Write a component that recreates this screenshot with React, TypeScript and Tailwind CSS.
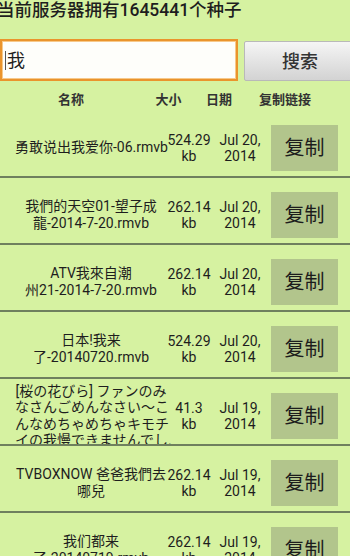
const FONT = "font-['Roboto','Noto_Sans_CJK_SC',sans-serif]";

type Torrent = {
  name: string[];
  size: string;
  date: string;
};

const torrents: Torrent[] = [
  { name: ['勇敢说出我爱你-06.rmvb'], size: '524.29', date: 'Jul 20,' },
  { name: ['我們的天空01-望子成', '龍-2014-7-20.rmvb'], size: '262.14', date: 'Jul 20,' },
  { name: ['ATV我來自潮', '州21-2014-7-20.rmvb'], size: '262.14', date: 'Jul 20,' },
  { name: ['日本!我来', '了-20140720.rmvb'], size: '524.29', date: 'Jul 20,' },
  {
    name: ['[桜の花びら] ファンのみ', 'なさんごめんなさい～こ', 'んなめちゃめちゃキモチ', 'イの我慢できませんでし.'],
    size: '41.3',
    date: 'Jul 19,',
  },
  { name: ['TVBOXNOW 爸爸我們去', '哪兒'], size: '262.14', date: 'Jul 19,' },
  { name: ['我们都来', '了-20140719.rmvb'], size: '262.14', date: 'Jul 19,' },
];

const Row = ({ t }: { t: Torrent }) => (
  <div className="flex items-center h-[67px] shrink-0 pt-[8px] border-b-2 border-[#6f805e] overflow-hidden">
    <div className="w-[152px] ml-[15px] text-center text-[14px] leading-[16.5px]">
      {t.name.map((line, i) => (
        <div key={i} className="whitespace-nowrap">{line}</div>
      ))}
    </div>
    <div className="w-[44px] text-center text-[14px] leading-[16px]">
      <div className="whitespace-nowrap">{t.size}</div>
      <div>kb</div>
    </div>
    <div className="w-[50px] ml-[4px] text-center text-[14px] leading-[16px]">
      <div className="whitespace-nowrap">{t.date}</div>
      <div>2014</div>
    </div>
    <button className="ml-[6px] w-[67px] h-[46px] bg-[#b2c58c] text-[20px] text-[#1c1c1c] flex items-center justify-center">
      复制
    </button>
  </div>
);

export default function App() {
  return (
    <div className={`w-[350px] h-[556px] overflow-hidden bg-[#d6f2a1] text-[#1e1e1e] flex flex-col ${FONT}`}>
      {/* title */}
      <div className="h-[20px] shrink-0 ml-[-3px] text-[17.5px] leading-[20px] font-medium whitespace-nowrap">
        当前服务器拥有1645441个种子
      </div>

      {/* search */}
      <div className="flex items-start gap-[6px] mt-[19px] shrink-0">
        <div className="w-[238px] h-[42px] bg-[#fefefa] border-[2.5px] border-[#ea942c] shadow-[inset_0_0_0_1px_#f7c98a] flex items-center pl-[3px]">
          <span className="w-px h-[19px] bg-[#555]"></span>
          <span className="ml-[1px] text-[18px]">我</span>
        </div>
        <button className="mt-[2px] h-[40px] flex-1 mr-[-6px] rounded-[2px] border border-[#b9b9b9] bg-gradient-to-b from-[#f5f5f5] to-[#d3d3d3] text-[18px] text-[#333] font-medium">
          搜索
        </button>
      </div>

      {/* header */}
      <div className="flex items-center h-[30px] pt-[8px] shrink-0 text-[13px] font-bold text-[#333]">
        <div className="w-[142px] text-center">名称</div>
        <div className="w-[53px] text-center">大小</div>
        <div className="w-[48px] text-center">日期</div>
        <div className="w-[84px] text-center">复制链接</div>
      </div>

      {/* list */}
      {torrents.map((t, i) => (
        <Row key={i} t={t} />
      ))}
    </div>
  );
}
